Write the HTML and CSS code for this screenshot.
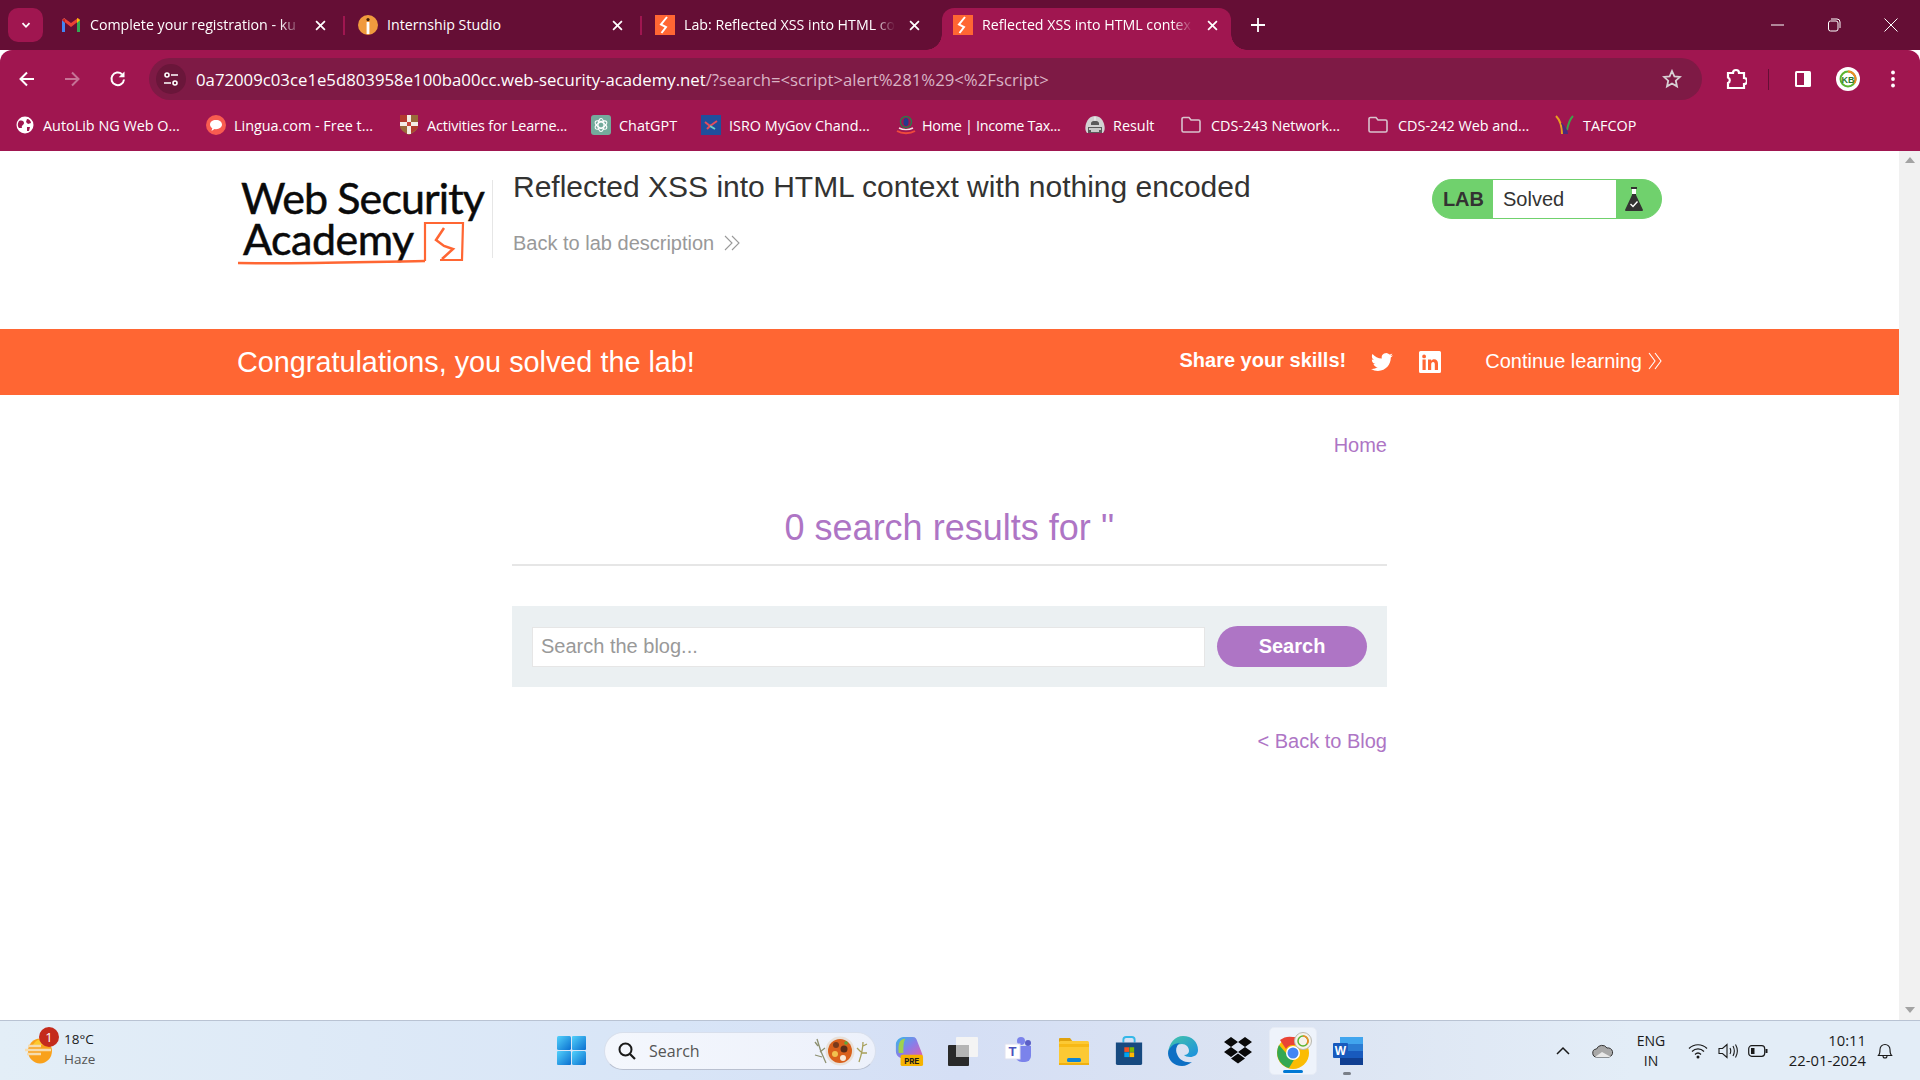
FILE: index.html
```html
<!DOCTYPE html>
<html lang="en">
<head>
<meta charset="utf-8">
<title>Reflected XSS into HTML context with nothing encoded</title>
<link rel="stylesheet" href="styles.css">
</head>
<body>
<div class="screen">
  <div class="tabstrip">
    <div class="tab-search"><svg class="i12" viewBox="0 0 12 12"><path d="M2.5 4.2 6 7.8l3.500-3.600" fill="none" stroke="#fff" stroke-width="1.800"/></svg></div>
    <div class="tab sep">
      <svg class="fav" viewBox="0 0 20 20"><path d="M1 17V5l3-2v14z" fill="#4285f4"/><path d="M19 17V5l-3-2v14z" fill="#34a853"/><path d="M1 5l2-2 7 5 7-5 2 2-9 7z" fill="#ea4335"/><path d="M16 3l3 2-3 3z" fill="#fbbc04"/><path d="M1 5l3 3V4z" fill="#c5221f"/></svg>
      <span class="tab-title">Complete your registration - ku</span>
      <svg class="tab-x" viewBox="0 0 10 10"><path d="M1 1l8 8M9 1 1 9" stroke="#fff" stroke-width="1.600"/></svg>
    </div>
    <div class="tab sep">
      <svg class="fav" viewBox="0 0 20 20"><circle cx="10" cy="10" r="10" fill="#f09a3e"/><rect x="8.600" y="7" width="2.800" height="12" fill="#fff"/><circle cx="10" cy="4.600" r="1.600" fill="#40200a"/></svg>
      <span class="tab-title tab-plain">Internship Studio</span>
      <svg class="tab-x" viewBox="0 0 10 10"><path d="M1 1l8 8M9 1 1 9" stroke="#fff" stroke-width="1.600"/></svg>
    </div>
    <div class="tab">
      <svg class="fav" viewBox="0 0 20 20"><rect width="20" height="20" fill="#ff6633"/><path d="M12 2 6 9.500l5 2.500-4.500 6" fill="none" stroke="#fff" stroke-width="2"/></svg>
      <span class="tab-title">Lab: Reflected XSS into HTML co</span>
      <svg class="tab-x" viewBox="0 0 10 10"><path d="M1 1l8 8M9 1 1 9" stroke="#fff" stroke-width="1.600"/></svg>
    </div>
    <div class="tab tab-active">
      <svg class="fav" viewBox="0 0 20 20"><rect width="20" height="20" fill="#ff6633"/><path d="M12 2 6 9.500l5 2.500-4.500 6" fill="none" stroke="#fff" stroke-width="2"/></svg>
      <span class="tab-title">Reflected XSS into HTML contex</span>
      <svg class="tab-x" viewBox="0 0 10 10"><path d="M1 1l8 8M9 1 1 9" stroke="#fff" stroke-width="1.600"/></svg>
    </div>
    <svg class="newtab" viewBox="0 0 14 14"><path d="M7 0v14M0 7h14" stroke="#fff" stroke-width="1.800"/></svg>
    <div class="winctl">
      <svg class="wc wc-min" viewBox="0 0 14 14"><path d="M0 7h13" stroke="#fff" stroke-width="1"/></svg>
      <svg class="wc" viewBox="0 0 14 14"><rect x="1.500" y="3" width="9.500" height="10" rx="2" fill="none" stroke="#fff"/><path d="M4 1h6a3 3 0 0 1 3 3v6" fill="none" stroke="#fff"/></svg>
      <svg class="wc" viewBox="0 0 14 14"><path d="M.5.500l13 13M13.500.500l-13 13" stroke="#fff"/></svg>
    </div>
  </div>

  <div class="toolbar">
    <svg class="tb-ico" viewBox="0 0 20 20"><path d="M17 10H4M10 3.500 3.500 10l6.500 6.500" fill="none" stroke="#fff" stroke-width="2"/></svg>
    <svg class="tb-ico dim" viewBox="0 0 20 20"><path d="M3 10h13M10 3.500l6.500 6.500-6.500 6.500" fill="none" stroke="#fff" stroke-width="2"/></svg>
    <svg class="tb-ico reload" viewBox="0 0 20 20"><path d="M16 10.500A6.300 6.300 0 1 1 14 5.200" fill="none" stroke="#fff" stroke-width="2"/><path d="M16.500 2.500v5.800h-5.800z" fill="#fff"/></svg>
    <div class="omnibox">
      <span class="site-btn"><svg class="i16" viewBox="0 0 16 16"><circle cx="4" cy="4" r="2" fill="none" stroke="#fff" stroke-width="1.600"/><path d="M8 4h7M1 12h7" stroke="#fff" stroke-width="1.600"/><circle cx="12" cy="12" r="2" fill="none" stroke="#fff" stroke-width="1.600"/></svg></span>
      <span class="url"><span class="url-host">0a72009c03ce1e5d803958e100ba00cc.web-security-academy.net</span><span class="url-rest">/?search=&lt;script&gt;alert%281%29&lt;%2Fscript&gt;</span></span>
      <svg class="star" viewBox="0 0 20 20"><path d="m10 2 2.400 5.300 5.600.6-4.200 3.800 1.200 5.700L10 14.500l-5 2.900 1.200-5.700L2 7.900l5.600-.6z" fill="none" stroke="#d8d0d4" stroke-width="1.800"/></svg>
    </div>
    <svg class="ext" viewBox="0 0 22 22"><path d="M3 5h5a3 3 0 0 1 6 0h5v5a3 3 0 0 1 0 6v4H3v-5a3 3 0 0 0 0-5.500z" fill="none" stroke="#fff" stroke-width="2.200"/></svg>
    <span class="tb-div"></span>
    <svg class="tb-ico panel" viewBox="0 0 20 20"><rect x="2" y="2" width="16" height="16" rx="1.500" fill="#fff"/><rect x="4" y="4" width="7" height="12" fill="#a01650"/></svg>
    <svg class="avatar" viewBox="0 0 24 24"><circle cx="12" cy="12" r="12" fill="#fff"/><circle cx="12" cy="12" r="7.500" fill="none" stroke="#5cb531" stroke-width="2"/><path d="M12 4.500a7.500 7.500 0 0 1 6 12" fill="none" stroke="#f08a24" stroke-width="2"/><text x="12" y="15.500" class="av-text">KB</text></svg>
    <svg class="tb-ico dots" viewBox="0 0 20 20"><circle cx="10" cy="3.500" r="1.900" fill="#fff"/><circle cx="10" cy="10" r="1.900" fill="#fff"/><circle cx="10" cy="16.500" r="1.900" fill="#fff"/></svg>
  </div>

  <div class="bookmarks">
    <div class="bm"><svg class="bm-ico" viewBox="0 0 18 18"><circle cx="9" cy="9" r="8.500" fill="#fff"/><path d="M3 5c3-1 5 0 5 2s-3 2-2 5l-3 0C1 9 2 7 3 5zM11 3c2 0 4 2 4 4l-3 1-2-2zM11 11l3 0-1 4-2 0z" fill="#a01650"/></svg><span>AutoLib NG Web O...</span></div>
    <div class="bm"><svg class="bm-ico-l" viewBox="0 0 20 20"><circle cx="10" cy="10" r="10" fill="#f85c50"/><path d="M10 5c3.600 0 6 2 6 4.600s-2.400 4.600-6 4.600l-1.500-.1L5.500 16l.8-2.800C4.800 12.400 4 11.100 4 9.600 4 7 6.400 5 10 5z" fill="#fff"/></svg><span>Lingua.com - Free t...</span></div>
    <div class="bm"><svg class="bm-ico-l" viewBox="0 0 20 20"><path d="M1 0h18v11c0 4-4 6-9 9-5-3-9-5-9-9z" fill="#9a6a3a"/><path d="M1 0h9v8H1zM10 10h9v1c0 3-4 5-9 8z" fill="#b33a2e"/><path d="M10 0v19M1 9h18" stroke="#f4ece4" stroke-width="4"/><rect x="8" y="7" width="4" height="4" fill="#c9463a"/></svg><span class="bm-tight1">Activities for Learne...</span></div>
    <div class="bm"><svg class="bm-ico-l" viewBox="0 0 20 20"><rect width="20" height="20" rx="3" fill="#74aa9c"/><g fill="none" stroke="#fff" stroke-width="1.200"><ellipse cx="10" cy="10" rx="3" ry="6.500"/><ellipse cx="10" cy="10" rx="3" ry="6.500" transform="rotate(60 10 10)"/><ellipse cx="10" cy="10" rx="3" ry="6.500" transform="rotate(120 10 10)"/></g></svg><span>ChatGPT</span></div>
    <div class="bm"><svg class="bm-ico-l" viewBox="0 0 20 20"><rect width="20" height="20" fill="#1f4f9c"/><path d="M4 7l5 4 7-5M6 14l4-4" stroke="#e34d5c" stroke-width="2" fill="none"/><path d="M9 11l5 3" stroke="#6dd0c8" stroke-width="2"/></svg><span>ISRO MyGov Chand...</span></div>
    <div class="bm"><svg class="bm-ico-h" viewBox="0 0 20 20"><circle cx="10" cy="7" r="5.500" fill="none" stroke="#2d7a4a" stroke-width="1.400"/><ellipse cx="10" cy="7" rx="2.500" ry="4" fill="#233a8b"/><path d="M1 16c5 3 13 3 18 0" fill="none" stroke="#ef4a3c" stroke-width="2"/><path d="M3 13c4 2 10 2 14 0" fill="none" stroke="#f6dfe4" stroke-width="1.500"/></svg><span class="bm-tight2">Home | Income Tax...</span></div>
    <div class="bm"><svg class="bm-ico-l" viewBox="0 0 20 20"><path d="M2 18c-1.500-2-2-4-1.500-7C1.500 5 5 1 10 1s8.500 4 9.500 10c.5 3 0 5-1.500 7z" fill="#d2d2d2"/><path d="M3 18v-6h14v6zM6 8c1-3 7-3 8 0v2H6z" fill="#5a5a5a"/><path d="M4 14h12M6 16h8M10 2v4" stroke="#eee" stroke-width="1.300"/></svg><span>Result</span></div>
    <div class="bm"><svg class="bm-ico-f" viewBox="0 0 20 18"><path d="M1 3a1.500 1.500 0 0 1 1.500-1.500H8L10 4h7.500A1.500 1.500 0 0 1 19 5.500v9a1.500 1.500 0 0 1-1.500 1.500h-15A1.500 1.500 0 0 1 1 14.500z" fill="none" stroke="#d9c3cd" stroke-width="1.600"/></svg><span>CDS-243 Network...</span></div>
    <div class="bm"><svg class="bm-ico-f" viewBox="0 0 20 18"><path d="M1 3a1.500 1.500 0 0 1 1.500-1.500H8L10 4h7.500A1.500 1.500 0 0 1 19 5.500v9a1.500 1.500 0 0 1-1.500 1.500h-15A1.500 1.500 0 0 1 1 14.500z" fill="none" stroke="#d9c3cd" stroke-width="1.600"/></svg><span>CDS-242 Web and...</span></div>
    <div class="bm"><svg class="bm-ico-l" viewBox="0 0 20 20"><path d="M1 1c4 4 6 9 6 18" fill="none" stroke="#e8a020" stroke-width="2"/><path d="M18 1c-4 4-5 9-6 14" fill="none" stroke="#3da24a" stroke-width="2"/><path d="M6 8c2 4 2 8 2 11h5c0-3-2-7-6-11z" fill="#4b2a7c"/></svg><span>TAFCOP</span></div>
  </div>

  <div class="viewport">
    <main class="page">
      <header class="lab-header">
        <div class="logo">
          <div class="logo-text">Web Security<br><span class="logo-l2">Academy</span></div>
          <svg class="logo-art" viewBox="0 0 249 85"><path d="M1 83c60 1 120-1 187-2" fill="none" stroke="#ff6633" stroke-width="2.500"/><path d="M188 81V43h38l-1 37h-22" fill="none" stroke="#ff6633" stroke-width="2.200"/><path d="M207 48l-8 12 8 6 9 3-11 10" fill="none" stroke="#ff6633" stroke-width="2.500"/></svg>
        </div>
        <span class="head-rule"></span>
        <div class="head-text">
          <h1 class="lab-title">Reflected XSS into HTML context with nothing encoded</h1>
          <a class="back-desc">Back to lab description <svg class="chev" viewBox="0 0 16 16"><path d="M1 1l7 7-7 7M8 1l7 7-7 7" fill="none" stroke="currentColor" stroke-width="1.100"/></svg></a>
        </div>
        <div class="lab-badge">
          <span class="badge-lab">LAB</span>
          <span class="badge-state">Solved</span>
          <span class="badge-ico"><svg class="flask" viewBox="0 0 20 26"><path d="M7 1h6v2h-1v6l7 15a1 1 0 0 1-1 1H2a1 1 0 0 1-1-1L8 9V3H7z" fill="#333332"/><rect x="8" y="3" width="4" height="5" fill="#fff"/><path d="m6.500 18 2.500 2.500 4.500-5" fill="none" stroke="#fff" stroke-width="1.400"/></svg></span>
        </div>
      </header>

      <section class="banner">
        <div class="banner-inner">
          <span class="congrats">Congratulations, you solved the lab!</span>
          <span class="share">Share your skills!</span>
          <svg class="twitter" viewBox="0 0 24 24"><path d="M23.950 4.570a10 10 0 0 1-2.820.77 4.960 4.960 0 0 0 2.160-2.720c-.95.550-2 .96-3.130 1.190a4.920 4.920 0 0 0-8.380 4.480C7.690 8.100 4.070 6.130 1.640 3.160a4.820 4.820 0 0 0-.67 2.480c0 1.710.87 3.210 2.190 4.100a4.900 4.900 0 0 1-2.230-.62v.06a4.920 4.920 0 0 0 3.950 4.830 5 5 0 0 1-2.210.08 4.940 4.940 0 0 0 4.610 3.420A9.870 9.870 0 0 1 0 19.540a14 14 0 0 0 7.560 2.210c9.050 0 14-7.500 14-13.980 0-.21 0-.42-.02-.63a9.940 9.940 0 0 0 2.410-2.570z" fill="#fff"/></svg>
          <svg class="linkedin" viewBox="0 0 22 22"><path d="M1.500 0h19A1.500 1.500 0 0 1 22 1.500v19a1.500 1.500 0 0 1-1.500 1.500h-19A1.500 1.500 0 0 1 0 20.500v-19A1.500 1.500 0 0 1 1.500 0zM3.500 8.500V19h3.200V8.500zm1.600-5a1.900 1.900 0 1 0 0 3.800 1.900 1.900 0 0 0 0-3.800zM9 8.500V19h3.200v-5.400c0-1.500.6-2.500 1.900-2.500s1.700 1 1.700 2.500V19H19v-6.300c0-3-1.500-4.500-3.700-4.500-1.500 0-2.600.7-3.100 1.700V8.500z" fill="#fff" fill-rule="evenodd"/></svg>
          <a class="continue">Continue learning <svg class="chev-c" viewBox="0 0 14 18"><path d="M1 1l6 8-6 8M7 1l6 8-6 8" fill="none" stroke="currentColor" stroke-width="1.100"/></svg></a>
        </div>
      </section>

      <section class="blog">
        <nav class="blog-nav"><a class="lnk">Home</a></nav>
        <h2 class="results">0 search results for ''</h2>
        <hr class="rule">
        <form class="search-box">
          <input class="search-input" type="text" placeholder="Search the blog...">
          <button class="search-btn" type="button">Search</button>
        </form>
        <div class="back-blog"><a class="lnk">&lt; Back to Blog</a></div>
      </section>
    </main>
    <aside class="scrollbar">
      <svg class="sb-arrow" viewBox="0 0 10 6"><path d="M5 0l5 6H0z" fill="#a3a3a3"/></svg>
      <svg class="sb-arrow" viewBox="0 0 10 6"><path d="M5 6 10 0H0z" fill="#a3a3a3"/></svg>
    </aside>
  </div>

  <footer class="taskbar">
    <div class="weather">
      <div class="w-ico">
        <svg class="w-sun" viewBox="0 0 28 26"><ellipse cx="15" cy="13" rx="12" ry="12.500" fill="#f9a11b"/><path d="M15 1a12 12 0 0 1 10 6H8a12 12 0 0 1 7-6z" fill="#fdc92f"/><path d="M3 8h13M0 12h26M2 16h14" stroke="#f5dcae" stroke-width="2.400"/></svg>
        <span class="w-badge">1</span>
      </div>
      <div class="w-text"><span class="w-temp">18°C</span><span class="w-desc">Haze</span></div>
    </div>
    <svg class="winlogo" viewBox="0 0 29 29"><defs><linearGradient id="wg" x1="0" y1="0" x2="1" y2="1"><stop offset="0" stop-color="#52d1fb"/><stop offset="1" stop-color="#0a6fd0"/></linearGradient></defs><rect width="14" height="14" rx="1.500" fill="url(#wg)"/><rect x="15" width="14" height="14" rx="1" fill="url(#wg)"/><rect y="15" width="14" height="14" rx="1" fill="url(#wg)"/><rect x="15" y="15" width="14" height="14" rx="1.500" fill="url(#wg)"/></svg>
    <div class="task-search">
      <svg class="glass" viewBox="0 0 18 18"><circle cx="7.500" cy="7.500" r="6" fill="none" stroke="#1a1a1a" stroke-width="2"/><path d="m12 12 5 5" stroke="#1a1a1a" stroke-width="2.200"/></svg>
      <span class="ts-text">Search</span>
      <svg class="ts-art" viewBox="0 0 56 30"><path d="M4 3c2 8 5 16 9 24M5 10l-3-4M7 16l5-4M9 21l-7-2" fill="none" stroke="#8d9070" stroke-width="1.300"/><path d="M50 6c0 6-2 14-4 20M50 10l4-2M48 16l-4-4M48 17l6 0" fill="none" stroke="#a8a05a" stroke-width="1.300"/><circle cx="27" cy="15" r="14.500" fill="#e8e0d8"/><circle cx="27" cy="15" r="12" fill="#d9601c"/><circle cx="23" cy="9" r="3" fill="#7a3a1c"/><circle cx="31" cy="13" r="3.500" fill="#5a2c18"/><circle cx="22" cy="18" r="3" fill="#f2c14f"/><circle cx="30" cy="22" r="3" fill="#f8e8d8"/><circle cx="33" cy="7" r="1.800" fill="#5aa83c"/></svg>
    </div>
    <div class="apps">
      <div class="app"><svg class="app-ico" viewBox="0 0 30 32"><defs><linearGradient id="cp" x1="0" y1="0" x2="1" y2="1"><stop offset="0" stop-color="#35b8e8"/><stop offset=".5" stop-color="#8a7de8"/><stop offset="1" stop-color="#e85ca8"/></linearGradient></defs><path d="M9 1h10c3 0 4 2 5 5l5 13c1 3-1 5-4 5H9C5 24 1 21 1 16V9c0-4 4-8 8-8z" fill="url(#cp)"/><path d="M4 18C3 9 5 3 11 3c-2 4-2 8-2 15z" fill="#9fd24c"/><rect x="6" y="20" width="24" height="12" rx="2" fill="#f6b300"/><text x="18" y="29.500" class="pre">PRE</text></svg></div>
      <div class="app"><svg class="app-ico app-shift" viewBox="0 0 30 30"><rect x="8" y="1" width="22" height="20" rx="1" fill="#f4f4f4"/><rect y="9" width="21" height="21" rx="1" fill="#2a2a2a"/><rect x="8" y="9" width="13" height="12" fill="#b5b5b5"/></svg></div>
      <div class="app"><svg class="app-ico" viewBox="0 0 30 30"><circle cx="24" cy="7" r="3" fill="#5b5fc7"/><circle cx="17" cy="5" r="4" fill="#7b83eb"/><path d="M11 10h16v10a6 6 0 0 1-6 6h-3a7 7 0 0 1-7-7z" fill="#7b83eb"/><rect x="1" y="8" width="15" height="15" fill="#fff" stroke="#dde0f0"/><text x="8.500" y="20" class="teams">T</text></svg></div>
      <div class="app"><svg class="app-ico" viewBox="0 0 30 30"><path d="M0 3a1 1 0 0 1 1-1h10l3 4H0z" fill="#e0a20e"/><rect y="5" width="30" height="24" rx="1.500" fill="#fcc934"/><rect y="8" width="30" height="3" fill="#f7b916"/><rect x="8" y="22" width="14" height="4" rx="1.500" fill="#0f84d4"/><rect y="27" width="30" height="2" fill="#f0b010"/></svg></div>
      <div class="app"><svg class="app-ico" viewBox="0 0 30 32"><path d="M9 7V4a3 3 0 0 1 3-3h6a3 3 0 0 1 3 3v3" fill="none" stroke="#35b8e8" stroke-width="2"/><path d="M1 7h28v22a2 2 0 0 1-2 2H3a2 2 0 0 1-2-2z" fill="#174a80"/><rect x="10" y="12" width="5" height="5" fill="#f25022"/><rect x="15.500" y="12" width="5" height="5" fill="#7fba00"/><rect x="10" y="17.500" width="5" height="5" fill="#00a4ef"/><rect x="15.500" y="17.500" width="5" height="5" fill="#ffb900"/></svg></div>
      <div class="app"><svg class="app-ico" viewBox="0 0 30 30"><defs><linearGradient id="ed" x1="0" y1="0" x2="1" y2="1"><stop offset="0" stop-color="#45c6a8"/><stop offset="1" stop-color="#1a8fe0"/></linearGradient></defs><path d="M15 0c9 0 15 6 15 14 0 5-4 7-8 7-3 0-5-1-6-2 3 0 5-2 5-4 0-4-3-7-7-7-6 0-11 4-14 9C1 7 7 0 15 0z" fill="url(#ed)"/><path d="M0 17c1-6 6-10 12-10-3 2-5 6-3 11 2 6 8 9 15 8-3 2-6 4-10 4C6 30 0 24 0 17z" fill="#0d6fc4"/></svg></div>
      <div class="app"><svg class="app-ico" viewBox="0 0 30 30"><path d="M8 1l7 5-7 5-7-5zM22 1l7 5-7 5-7-5zM1 16l7-5 7 5-7 5zM29 16l-7-5-7 5 7 5zM8 22.500l7-5 7 5-7 5z" fill="#0a0a0a"/></svg></div>
      <div class="app app-active"><svg class="app-ico chrome" viewBox="0 0 36 38"><g transform="translate(0 4)"><circle cx="16" cy="17" r="16" fill="#fbbc04"/><path d="M16 1a16 16 0 0 1 14 8H16a8 8 0 0 0-7 4L3 4a16 16 0 0 1 13-3z" fill="#ea4335"/><path d="M2 9a16 16 0 0 0 10 23l6-10a8 8 0 0 1-9-5z" fill="#34a853"/><circle cx="16" cy="17" r="7" fill="#fff"/><circle cx="16" cy="17" r="5.500" fill="#4285f4"/></g><circle cx="26" cy="9" r="8.500" fill="#f6f2ea" stroke="#b8b8b0"/><circle cx="26" cy="9" r="5" fill="none" stroke="#5cb531" stroke-width="1.500"/><path d="M26 4a5 5 0 0 1 4 8" fill="none" stroke="#f08a24" stroke-width="1.500"/></svg><span class="app-bar"></span></div>
      <div class="app"><svg class="app-ico" viewBox="0 0 30 30"><rect x="7" y="1" width="23" height="28" rx="2" fill="#2b7cd3"/><rect x="7" y="1" width="23" height="7" fill="#41a5ee"/><rect x="7" y="22" width="23" height="7" fill="#103f91"/><rect x="7" y="15" width="23" height="7" fill="#185abd"/><rect y="7" width="15" height="15" rx="1" fill="#185abd"/><text x="7.500" y="19" class="word">W</text></svg><span class="app-dot"></span></div>
    </div>
    <div class="tray">
      <div class="t-caret"><svg class="i16" viewBox="0 0 16 10"><path d="M2 8l6-6 6 6" fill="none" stroke="#1a1a1a" stroke-width="1.500"/></svg></div>
      <div class="t-cloud"><svg class="cloud" viewBox="0 0 22 14"><path d="M5 13a4 4 0 0 1-.5-8A6 6 0 0 1 15 4a4.500 4.500 0 0 1 2 9z" fill="#a8a8a8" stroke="#333" stroke-width="1"/><path d="M3 13l7-5 9 5z" fill="#e8e8e8"/></svg></div>
      <div class="t-lang"><span>ENG</span><span>IN</span></div>
      <div class="t-icons">
        <svg class="t-ico" viewBox="0 0 20 16"><path d="M1 5.500c5-5 13-5 18 0M4 8.500c3.500-3.500 8.500-3.500 12 0M7 11.500c2-2 4-2 6 0" fill="none" stroke="#1a1a1a" stroke-width="1.200"/><circle cx="10" cy="14" r="1.500" fill="#1a1a1a"/></svg>
        <svg class="t-ico" viewBox="0 0 20 16"><path d="M1 5.500h3.500L9 1.500v13l-4.500-4H1z" fill="none" stroke="#1a1a1a" stroke-width="1.100"/><path d="M12 5c1 2 1 4 0 6M15 3c1.600 3 1.600 7 0 10M17.500 1.500c2.300 4 2.300 9 0 13" fill="none" stroke="#1a1a1a" stroke-width="1.100"/></svg>
        <svg class="t-ico" viewBox="0 0 20 14"><rect x=".700" y="1.700" width="16" height="10.600" rx="3" fill="none" stroke="#1a1a1a" stroke-width="1.200"/><rect x="3" y="4" width="3.500" height="6" fill="#1a1a1a"/><rect x="17.500" y="5" width="2" height="4" fill="#1a1a1a"/></svg>
      </div>
      <div class="t-clock"><span>10:11</span><span>22-01-2024</span></div>
      <div class="t-bell"><svg class="bell" viewBox="0 0 16 18"><path d="M1.500 13.500c1.500-1.500 1.500-3 1.500-6a5 5 0 0 1 10 0c0 3 0 4.500 1.500 6z" fill="none" stroke="#1a1a1a" stroke-width="1.100"/><path d="M6 14a2 2 0 0 0 4 0" fill="none" stroke="#1a1a1a" stroke-width="1.100"/></svg></div>
    </div>
  </footer>
</div>
</body>
</html>
```

FILE: styles.css
```css
* { box-sizing: border-box; }
html, body { margin: 0; height: 100%; overflow: hidden; background: #fff; }
svg { display: block; flex: none; }
.screen { display: flex; flex-direction: column; height: 1080px; width: 1920px; font-family: "Liberation Sans", Arial, sans-serif; color: #333332; }
.i12 { width: 12px; height: 12px; }
.i16 { width: 16px; height: 16px; }

/* tab strip */
.tabstrip { height: 50px; background: #650e35; display: flex; align-items: flex-start; padding-left: 8px; color: #fff; font-family: "Open Sans", sans-serif; }
.tab-search { width: 35px; height: 34px; margin-top: 8px; border-radius: 10px; background: #a01650; display: flex; align-items: center; justify-content: center; margin-right: 8px; }
.tab { width: 297px; height: 42px; margin-top: 8px; display: flex; align-items: center; padding: 0 22px 0 10px; position: relative; flex: none; }
.tab.sep::after { content: ""; position: absolute; right: 3px; top: 8px; width: 2px; height: 19px; background: #a01650; }
.fav { width: 20px; height: 20px; margin-top: -8px; }
.tab-title { flex: 1; margin-left: 9px; margin-top: -8px; font-size: 14.200px; line-height: 20px; white-space: nowrap; overflow: hidden; -webkit-mask-image: linear-gradient(90deg, #000 90%, transparent); mask-image: linear-gradient(90deg, #000 90%, transparent); min-width: 0; }
.tab-plain { -webkit-mask-image: none; mask-image: none; }
.tab-x { width: 11px; height: 11px; margin-left: 14px; margin-top: -8px; }
.tab-active { width: 289px; padding: 0 13px 0 11px; background: #a01650; border-radius: 12px 12px 0 0; }
.tab-active::before, .tab-active::after { content: ""; position: absolute; bottom: 0; width: 16px; height: 16px; background: radial-gradient(circle at var(--cx) 0, #650e35 15.500px, #a01650 16px); }
.tab-active::before { left: -16px; --cx: 0; }
.tab-active::after { right: -16px; --cx: 100%; }
.newtab { width: 14px; height: 14px; margin: 18px 0 0 20px; }
.winctl { margin-left: auto; display: flex; gap: 43.500px; padding: 18px 22px 0 0; }
.wc { width: 14px; height: 14px; }
.wc-min { margin-right: -2px; }

/* toolbar */
.toolbar { height: 57px; background: #a01650; border-radius: 12px 12px 0 0; display: flex; align-items: flex-start; padding: 8px 0 0 17px; }
.tb-ico { width: 20px; height: 20px; margin-top: 11px; margin-right: 25px; }
.tb-ico.dim { opacity: .4; }
.reload { margin-left: 1px; margin-right: 24px; }
.omnibox { width: 1553px; height: 42px; margin-left: -3px; border-radius: 21px; background: #7e1a45; display: flex; align-items: center; padding: 0 20px 0 7px; color: #fff; font-family: "Open Sans", sans-serif; }
.site-btn { width: 30px; height: 30px; border-radius: 50%; background: #6a163a; display: flex; align-items: center; justify-content: center; flex: none; }
.url { margin-left: 10px; font-size: 16.750px; white-space: nowrap; flex: 1; }
.url-rest { color: #d9b3c4; }
.star { width: 20px; height: 20px; }
.ext { width: 22px; height: 22px; margin: 10px 21px 0 23px; }
.tb-div { width: 1px; height: 21px; background: #650e35; margin-top: 11px; margin-right: 23px; }
.panel { margin-left: 1px; margin-right: 23px; }
.avatar { width: 24px; height: 24px; margin-top: 9px; margin-right: 23px; }
.av-text { font: 700 9px "Liberation Sans", sans-serif; fill: #2a7a2a; text-anchor: middle; }
.dots { margin: 11px 0 0 0; }

/* bookmarks */
.bookmarks { height: 44px; background: #a01650; display: grid; grid-template-columns: 190px 193px 192px 110px 195px 189px 96px 187px 187px auto; padding: 6px 0 0 16px; align-items: start; color: #fff; font-family: "Open Sans", sans-serif; font-size: 14.400px; }
.bm { display: flex; align-items: center; height: 24px; white-space: nowrap; }
.bm-ico { width: 18px; height: 18px; margin-right: 9px; }
.bm-ico-l { width: 20px; height: 20px; margin-right: 8px; }
.bm-ico-h { width: 20px; height: 20px; margin-right: 6px; }
.bm-ico-f { width: 20px; height: 18px; margin-right: 10px; }
.bm-tight1 { letter-spacing: -.15px; }
.bm-tight2 { letter-spacing: -.3px; }

/* page */
.viewport { flex: 1; display: flex; min-height: 0; }
.page { flex: 1; min-width: 0; background: #fff; }
.lab-header { height: 178px; width: 1425px; margin: 0 auto; display: flex; align-items: flex-start; padding-top: 29px; }
.logo { position: relative; width: 249px; height: 85px; flex: none; }
.logo-text { font-family: Lato, sans-serif; font-size: 43px; line-height: 41px; color: #0a0a0a; letter-spacing: -.9px; white-space: nowrap; padding-left: 4px; margin-top: -3px; -webkit-text-stroke: .5px #0a0a0a; }
.logo-l2 { padding-left: 2px; letter-spacing: -.5px; }
.logo-art { position: absolute; left: 0; top: 0; width: 249px; height: 85px; overflow: visible; }
.head-rule { width: 1px; height: 78px; background: #e6e6e6; margin-left: 6px; flex: none; }
.head-text { margin-left: 20px; flex: 1; margin-top: -10px; }
.lab-title { margin: 0; font-size: 30px; line-height: 34px; font-weight: 400; color: #333332; white-space: nowrap; }
.back-desc { display: flex; align-items: center; gap: 10px; margin-top: 27px; font-size: 20px; line-height: 24px; color: #999; }
.chev { width: 16px; height: 16px; }
.chev-c { width: 14px; height: 18px; }
.lab-badge { display: flex; width: 230px; height: 40px; margin-top: -1px; border-radius: 20px; background: #70d16d; flex: none; align-items: stretch; border: 1px solid #70d16d; }
.badge-lab { width: 60px; font-weight: 700; font-size: 20px; line-height: 38px; text-align: right; padding-right: 9px; color: #333332; }
.badge-state { width: 123px; background: #fff; font-size: 20px; line-height: 38px; padding-left: 10px; }
.badge-ico { flex: 1; display: flex; align-items: center; justify-content: center; padding-right: 9px; }
.flask { width: 20px; height: 26px; }

.banner { height: 66px; background: #ff6633; color: #fff; }
.banner-inner { width: 1425px; height: 100%; margin: 0 auto; display: flex; align-items: center; }
.congrats { font-size: 28.800px; flex: 1; }
.share { font-size: 20px; font-weight: 700; margin-top: -4px; }
.twitter { width: 24px; height: 22px; margin-left: 24px; }
.linkedin { width: 22px; height: 22px; margin-left: 25px; }
.continue { display: flex; align-items: center; gap: 6px; font-size: 20px; margin-left: 44px; margin-top: -2px; }

.blog { width: 875px; margin: 0 auto; }
.blog-nav { display: flex; justify-content: flex-end; padding-top: 38px; line-height: 24px; font-size: 20px; }
.lnk { color: #ae75c5; }
.results { margin: 0; padding-top: 49px; text-align: center; color: #ae75c5; font-size: 36px; line-height: 44px; font-weight: 400; }
.rule { height: 2px; border: 0; background: #e6e6e6; margin: 14px 0 0; }
.search-box { margin-top: 40px; height: 81px; background: #ebf0f2; display: flex; align-items: center; padding: 0 20px; }
.search-input { width: 673px; height: 40px; border: 1px solid #e6e6e6; background: #fff; padding: 0 8px; font: 20px "Liberation Sans", sans-serif; color: #333; outline: 0; }
.search-input::placeholder { color: #999; }
.search-btn { width: 150px; height: 41px; margin-left: 12px; border: 0; border-radius: 21px; background: #ae75c5; color: #fff; font: 700 20px "Liberation Sans", sans-serif; }
.back-blog { text-align: right; margin-top: 42px; font-size: 20px; line-height: 24px; }

.scrollbar { width: 21px; flex: none; background: #f1f1f1; display: flex; flex-direction: column; justify-content: space-between; align-items: center; padding: 6px 0 7px; }
.sb-arrow { width: 10px; height: 6px; }

/* taskbar */
.taskbar { height: 60px; border-top: 1px solid #b9c3d3; background: linear-gradient(90deg, #e3eef7 0%, #d8e5f7 35%, #d5dff5 50%, #dbe3f2 65%, #e3edf7 85%); display: flex; align-items: center; font-family: "Open Sans", sans-serif; color: #1a1a1a; position: relative; }
.weather { width: 557px; flex: none; display: flex; align-items: center; padding-left: 25px; }
.w-ico { position: relative; width: 28px; height: 26px; margin-top: 1px; }
.w-sun { width: 28px; height: 26px; }
.w-badge { position: absolute; left: 14px; top: -11px; width: 20px; height: 20px; border-radius: 50%; background: #c42b1c; color: #fff; font-size: 13px; line-height: 20px; text-align: center; }
.w-text { margin-left: 11px; margin-top: -4px; display: flex; flex-direction: column; font-size: 13.500px; line-height: 20px; }
.w-desc { color: #555; }
.winlogo { width: 29px; height: 29px; }
.task-search { width: 272px; height: 38px; margin-left: 18px; border-radius: 19px; background: linear-gradient(90deg, #f4f7fd, #edf1fb); border: 1px solid #d8dfec; border-bottom-color: #b9c0d0; display: flex; align-items: center; padding-left: 13px; }
.glass { width: 18px; height: 18px; }
.ts-text { margin-left: 13px; font-size: 16px; color: #555; flex: 1; }
.ts-art { width: 56px; height: 30px; margin-right: 6px; }
.apps { display: flex; margin-left: 6px; }
.app { width: 54.800px; height: 48px; position: relative; display: flex; align-items: center; justify-content: center; }
.app-ico { width: 30px; height: 30px; }
.app-shift { margin-left: -3px; }
.app .chrome { width: 36px; height: 38px; margin-left: 5px; }
.app-active { background: #eef3fb; border-radius: 5px; width: 48px; margin: 0 3.400px; border: 1px solid #e6ebf5; }
.app-bar { position: absolute; left: 13px; bottom: 1px; width: 20px; height: 3px; border-radius: 2px; background: #0078d4; }
.app-dot { position: absolute; left: 23px; bottom: 0; width: 8px; height: 3px; border-radius: 2px; background: #7a7f88; }
.pre { font: 700 9px "Liberation Mono", monospace; fill: #1a1a1a; text-anchor: middle; }
.teams { font: 700 13px "Liberation Sans", sans-serif; fill: #4b53bc; text-anchor: middle; }
.word { font: 700 12px "Liberation Sans", sans-serif; fill: #fff; text-anchor: middle; }
.tray { margin-left: auto; display: flex; align-items: center; padding-right: 16px; font-size: 14px; line-height: 20px; }
.t-caret { width: 30px; display: flex; justify-content: center; }
.t-cloud { width: 50px; display: flex; justify-content: center; }
.cloud { width: 22px; height: 14px; }
.t-lang { width: 46px; display: flex; flex-direction: column; align-items: center; }
.t-icons { width: 94px; padding-left: 14px; display: flex; gap: 10px; }
.t-ico { width: 20px; height: 16px; }
.t-clock { width: 98px; margin-top: -2px; display: flex; flex-direction: column; align-items: flex-end; white-space: nowrap; font-size: 14.800px; }
.t-bell { width: 38px; display: flex; justify-content: center; }
.bell { width: 16px; height: 18px; }
```
